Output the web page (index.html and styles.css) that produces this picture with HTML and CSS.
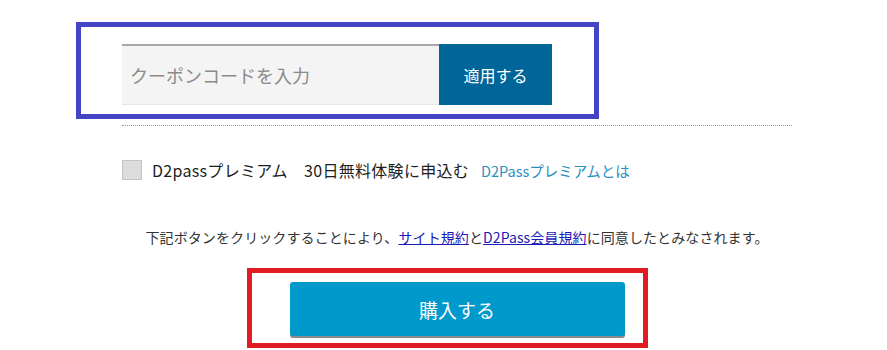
FILE: index.html
```html
<!DOCTYPE html>
<html lang="ja">
<head>
<meta charset="utf-8">
<link rel="stylesheet" href="styles.css">
</head>
<body>
<div class="page">
  <div class="coupon">
    <input class="coupon-input" type="text" placeholder="クーポンコードを入力">
    <button class="coupon-btn">適用する</button>
  </div>
  <div class="divider"></div>
  <label class="premium">
    <span class="check"></span>
    <span class="premium-text">D2passプレミアム　30日無料体験に申込む</span>
    <a class="premium-link" href="#">D2Passプレミアムとは</a>
  </label>
  <p class="terms">下記ボタンをクリックすることにより、<a href="#">サイト規約</a>と<a href="#">D2Pass会員規約</a>に同意したとみなされます。</p>
  <div class="buy-wrap">
    <button class="buy-btn">購入する</button>
  </div>
  <div class="frame frame-blue"></div>
  <div class="frame frame-red"></div>
</div>
</body>
</html>
```
FILE: styles.css
```css
html, body {
  margin: 0;
  padding: 0;
  background: #fff;
}
body {
  font-family: "Noto Sans CJK JP", "Noto Sans", sans-serif;
  color: #333;
}
.page {
  position: relative;
  width: 887px;
  height: 350px;
  overflow: hidden;
}
.coupon {
  display: flex;
  margin: 44px 0 0 122px;
}
.coupon-input {
  box-sizing: border-box;
  width: 317px;
  height: 61px;
  margin: 0;
  border: none;
  border-top: 2px solid #a9a9a9;
  border-bottom: 1px solid #e6e6e6;
  background: #f4f4f4;
  padding: 0 8px;
  font-family: inherit;
  font-size: 18px;
  outline: none;
}
.coupon-input::placeholder {
  color: #8a8a8a;
}
.coupon-btn {
  width: 113px;
  height: 61px;
  margin: 0;
  border: none;
  background: #006699;
  color: #fff;
  font-family: inherit;
  font-size: 16px;
  padding: 0;
}
.divider {
  margin: 20px 0 0 122px;
  width: 670px;
  border-top: 1px dotted #999;
}
.premium {
  display: flex;
  align-items: center;
  margin: 29px 0 0 122px;
  height: 30px;
}
.check {
  box-sizing: border-box;
  width: 20px;
  height: 20px;
  background: #dcdcdc;
  border: 1px solid #c4c4c4;
  margin-right: 10px;
}
.premium-text {
  font-size: 16px;
  letter-spacing: 0.3px;
  color: #1e1e1e;
}
.premium-link {
  margin-left: 12px;
  font-size: 14.5px;
  color: #2c8fc0;
  text-decoration: none;
}
.terms {
  margin: 42px 0 0 122px;
  width: 670px;
  text-align: center;
  font-size: 14px;
  letter-spacing: 0.1px;
  line-height: 20px;
  color: #333;
}
.terms a {
  color: #1a1ab8;
  text-decoration: underline;
}
.buy-wrap {
  margin: 35px 0 0 122px;
  width: 670px;
  display: flex;
  justify-content: center;
}
.buy-btn {
  width: 335px;
  height: 54px;
  margin: 0;
  border: none;
  border-radius: 3px;
  background: #0099cc;
  box-shadow: 0 2px 0 #8a8a8a;
  color: #fff;
  font-family: inherit;
  font-size: 19px;
  padding: 0;
}
.frame {
  position: absolute;
  box-sizing: border-box;
  border-style: solid;
  border-width: 5px;
}
.frame-blue {
  left: 76px;
  top: 22px;
  width: 523px;
  height: 97px;
  border-color: #4444c4;
}
.frame-red {
  left: 247px;
  top: 268px;
  width: 401px;
  height: 80px;
  border-color: #e01b24;
}
```
